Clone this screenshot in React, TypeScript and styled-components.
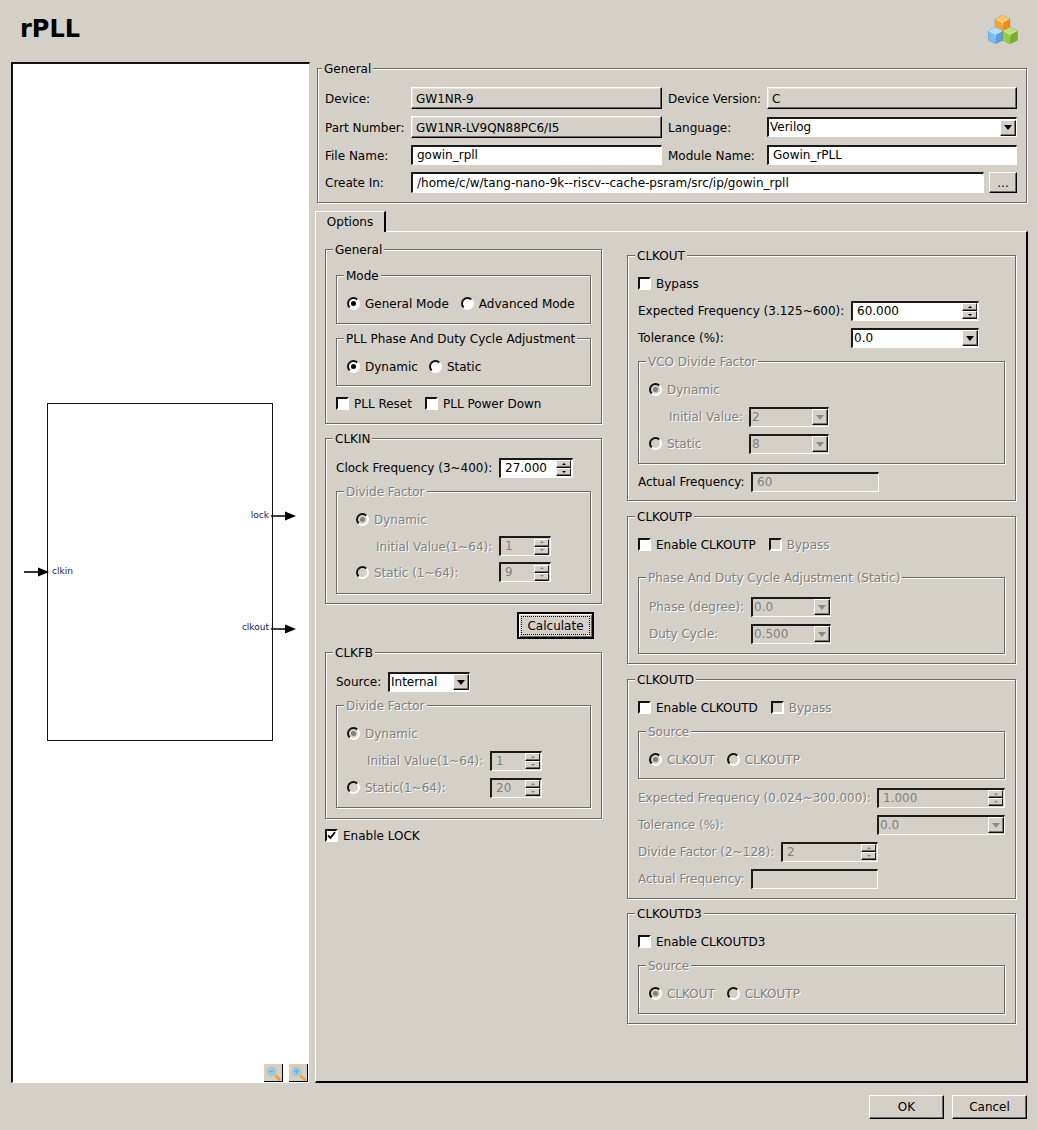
import React from "react";
import styled, { createGlobalStyle } from "styled-components";

const Global = createGlobalStyle`
  html, body { margin: 0; padding: 0; background: #d4d0c8; }
  body { font-family: "DejaVu Sans", sans-serif; font-size: 12px; color: #000; }
  #root { width: 1037px; height: 1130px; }
`;

const Page = styled.div`
  width: 1037px; height: 1130px; display: flex; flex-direction: column;
  background: #d4d0c8; overflow: hidden;
`;
const Header = styled.header`
  height: 62px; flex: none; box-sizing: border-box; padding: 15px 19px 0 20px;
  display: flex; justify-content: space-between; align-items: flex-start;
`;
const Title = styled.h1`
  margin: 0; font-size: 24px; line-height: 28px; font-weight: 700;
  font-family: "DejaVu Sans", sans-serif;
`;
const Main = styled.main`
  flex: none; height: 1021px; display: flex; padding-left: 11px; gap: 5px;
`;
const Preview = styled.section`
  position: relative; box-sizing: border-box; width: 299px; height: 1021px; background: #fff;
  border-style: solid; border-width: 2px 1px 1px 2px;
  border-color: #111 #cfcfc2 #fff #111;
`;
const Block = styled.div`
  position: absolute; left: 34px; top: 339px; width: 226px; height: 338px;
  box-sizing: border-box; border: 1px solid #111;
`;
const Pin = styled.div<{ $y: number; $out?: boolean }>`
  position: absolute; top: ${p => p.$y - 7}px; height: 14px; display: flex; align-items: center;
  ${p => p.$out ? "left: 100%; margin-left: -1px;" : "right: 100%; margin-right: -1px;"}
`;
const PinLabel = styled.span<{ $y: number; $out?: boolean }>`
  position: absolute; top: ${p => p.$y - 7}px; font-size: 9px; line-height: 13px; color: #10206a;
  ${p => p.$out ? "right: 3px;" : "left: 4px;"}
`;
const ZoomBtn = styled.button<{ $r: number }>`
  position: absolute; right: ${p => p.$r}px; bottom: 0; width: 19px; height: 18px; padding: 0;
  display: flex; align-items: center; justify-content: center; background: #d4d0c8;
  border: 0; border-right: 1px solid #000; border-bottom: 1px solid #000;
`;
const RightCol = styled.div`
  width: 713px; box-sizing: border-box; padding-top: 6px; display: flex; flex-direction: column;
`;
const Box = styled.div<{ $pt?: number; $pb?: number; $mt?: number }>`
  box-sizing: border-box; border: 1px solid #6b6965;
  box-shadow: 1px 1px 0 #fff, inset 1px 1px 0 #fff;
  padding: ${p => p.$pt ?? 14}px 10px ${p => p.$pb ?? 6}px 10px;
  margin-top: ${p => p.$mt ?? 0}px;
`;
const TopBox = styled(Box)`
  margin-left: 2px; margin-right: 1px; padding: 18px 9px 9px 7px; flex: none;
`;
const Legend = styled.div<{ $pull?: number }>`
  display: flex; height: 0; align-items: center; margin-top: ${p => -(p.$pull ?? 14) - 1}px;
  margin-bottom: ${p => (p.$pull ?? 14) + 1}px; margin-left: -3px;
`;
const LegendText = styled.span<{ $off?: boolean }>`
  background: #d4d0c8; padding: 2px 2px 0; white-space: nowrap; line-height: 15px;
  ${p => p.$off && "color: #808080; text-shadow: 1px 1px 0 #fff;"}
`;
const Row = styled.div<{ $h?: number; $gap?: number; $ml?: number; $mt?: number }>`
  display: flex; align-items: center; height: ${p => p.$h ?? 27}px;
  gap: ${p => p.$gap ?? 0}px; margin-left: ${p => p.$ml ?? 0}px; margin-top: ${p => p.$mt ?? 0}px;
`;
const Text = styled.span<{ $off?: boolean; $w?: number; $pl?: number; $ml?: number }>`
  flex: none; white-space: nowrap; line-height: 15px; box-sizing: border-box;
  padding-top: 2px; padding-left: ${p => p.$pl ?? 0}px; margin-left: ${p => p.$ml ?? 0}px;
  ${p => p.$w && `width: ${p.$w}px;`}
  ${p => p.$off && "color: #808080; text-shadow: 1px 1px 0 #fff;"}
`;
const ChoiceWrap = styled.label<{ $w?: number; $ml?: number }>`
  display: flex; align-items: center; gap: 5px; flex: none;
  ${p => p.$w && `width: ${p.$w}px;`}
  margin-left: ${p => p.$ml ?? 0}px;
`;
const RadioDot = styled.span<{ $on?: boolean; $off?: boolean }>`
  flex: none; width: 13px; height: 13px; box-sizing: border-box; border-radius: 50%;
  display: flex; align-items: center; justify-content: center;
  border: 2px solid; border-color: #111 #fff #fff #111;
  background: ${p => p.$off ? "#d4d0c8" : "#fff"};
  &::after {
    content: ""; width: 5px; height: 5px; border-radius: 50%;
    background: ${p => p.$on ? (p.$off ? "#808080" : "#000") : "transparent"};
  }
`;
const CheckBox = styled.span<{ $off?: boolean }>`
  flex: none; width: 13px; height: 13px; box-sizing: border-box;
  border: 2px solid; border-color: #111 #fff #fff #111;
  background: ${p => p.$off ? "#d4d0c8" : "#fff"};
  display: flex; align-items: center; justify-content: center;
`;
const Sunken = styled.div<{ $w: number; $off?: boolean; $ml?: number; $pl?: number; $h?: number }>`
  flex: none; box-sizing: border-box; width: ${p => p.$w}px; height: ${p => p.$h ?? 20}px;
  margin-left: ${p => p.$ml ?? 0}px;
  border-style: solid; border-color: #1a1a1a #fff #fff #1a1a1a;
  border-width: 2px 1px 1px 2px;
  background: ${p => p.$off ? "#d4d0c8" : "#fff"};
  display: flex; align-items: center; justify-content: space-between;
  padding-left: ${p => p.$pl ?? 4}px;
  ${p => p.$off && "color: #808080;"}
`;
const Value = styled.span`
  white-space: nowrap; line-height: 15px; overflow: hidden;
`;
const RaisedField = styled.div<{ $w: number; $h?: number }>`
  flex: none; box-sizing: border-box; width: ${p => p.$w}px; height: ${p => p.$h ?? 22}px;
  border: 1px solid; border-color: #fff #000 #000 #fff;
  box-shadow: inset -1px -1px 0 #6b6965, inset 1px 1px 0 #e6e3dc;
  display: flex; align-items: center; padding: 2px 0 0 4px;
`;
const SpinBtns = styled.div`
  flex: none; width: 15px; height: 16px; margin-right: 1px; display: flex; flex-direction: column;
`;
const SpinBtn = styled.div`
  flex: 1; box-sizing: border-box; background: #d4d0c8;
  border: 1px solid; border-color: #fff #222 #111 #fff;
  box-shadow: inset 0 -1px 0 #6b6965;
  display: flex; align-items: center; justify-content: center;
`;
const TriUp = styled.span<{ $off?: boolean }>`
  width: 0; height: 0; border-left: 2px solid transparent; border-right: 2px solid transparent;
  border-bottom: 2px solid ${p => p.$off ? "#808080" : "#000"}; margin-bottom: 1px;
`;
const TriDown = styled.span<{ $off?: boolean }>`
  width: 0; height: 0; border-left: 2px solid transparent; border-right: 2px solid transparent;
  border-top: 2px solid ${p => p.$off ? "#808080" : "#000"}; margin-bottom: 1px;
`;
const ComboBtn = styled.div`
  flex: none; width: 16px; height: 16px; box-sizing: border-box; background: #d4d0c8;
  border: 1px solid; border-color: #fff #111 #111 #fff;
  box-shadow: inset -1px -1px 0 #777;
  display: flex; align-items: center; justify-content: center;
`;
const ComboTri = styled.span<{ $off?: boolean }>`
  width: 0; height: 0; border-left: 4px solid transparent; border-right: 4px solid transparent;
  border-top: 5px solid ${p => p.$off ? "#8a8a8a" : "#000"};
`;
const MoreBtn = styled.button`
  flex: none; margin-left: 5px; width: 28px; height: 21px; padding: 0 0 2px; font: inherit; font-size: 12px;
  box-sizing: border-box; background: #d4d0c8; color: #000;
  border: 1px solid; border-color: #fff #000 #000 #fff;
  box-shadow: inset -1px -1px 0 #6b6965;
  display: flex; align-items: flex-end; justify-content: center;
`;
const TabBar = styled.div`
  display: flex; flex: none; margin-top: 8px; height: 20px; position: relative; z-index: 1;
`;
const Tab = styled.div`
  box-sizing: border-box; width: 71px; height: 21px; background: #d4d0c8;
  border-style: solid; border-color: #fff #000 transparent #fff; border-width: 1px 2px 0 1px;
  display: flex; align-items: center; justify-content: center;
`;
const Pane = styled.div`
  flex: 1; box-sizing: border-box; display: flex; gap: 25px; padding: 17px 0 0 9px;
  border-style: solid; border-color: #fff #000 #000 #fff; border-width: 1px 2px 2px 1px;
`;
const LeftTabCol = styled.div`
  width: 277px; flex: none; display: flex; flex-direction: column;
`;
const RightTabCol = styled.div`
  width: 389px; flex: none; padding-top: 6px; display: flex; flex-direction: column;
`;
const DefaultBtnRow = styled.div`
  display: flex; justify-content: flex-end; padding-right: 8px; margin-top: 8px;
`;
const DefaultBtn = styled.button`
  box-sizing: border-box; width: 77px; height: 27px; padding: 0; font: inherit; color: #000;
  background: #d4d0c8; border: 2px solid #000; outline: 1px dotted #000; outline-offset: -5px;
  box-shadow: inset 1px 1px 0 #fff, inset -1px -1px 0 #6b6965;
`;
const Footer = styled.footer`
  flex: 1; display: flex; justify-content: flex-end; gap: 8px; padding: 12px 10px 0 0;
`;
const PushBtn = styled.button`
  box-sizing: border-box; width: 75px; height: 24px; padding: 0; font: inherit; color: #000;
  background: #d4d0c8; border: 1px solid; border-color: #fff #000 #000 #fff;
  box-shadow: inset -1px -1px 0 #6b6965;
`;

type GroupProps = { title: string; off?: boolean; pt?: number; pb?: number; mt?: number; children?: React.ReactNode };
const Group = ({ title, off, pt = 14, pb = 6, mt = 0, children }: GroupProps) => (
  <Box $pt={pt} $pb={pb} $mt={mt}>
    <Legend $pull={pt}><LegendText $off={off}>{title}</LegendText></Legend>
    {children}
  </Box>
);
const Radio = ({ label, on, off, w, ml }: { label: string; on?: boolean; off?: boolean; w?: number; ml?: number }) => (
  <ChoiceWrap $w={w} $ml={ml}>
    <RadioDot $on={on} $off={off} />
    <Text $off={off}>{label}</Text>
  </ChoiceWrap>
);
const Check = ({ label, on, off, ml }: { label: string; on?: boolean; off?: boolean; ml?: number }) => (
  <ChoiceWrap $ml={ml}>
    <CheckBox $off={off}>
      {on && (
        <svg width="9" height="9" viewBox="0 0 9 9">
          <path d="M1 4.5 L3.5 7 L8 1" fill="none" stroke="#000" strokeWidth="1.8" />
        </svg>
      )}
    </CheckBox>
    <Text $off={off}>{label}</Text>
  </ChoiceWrap>
);
const Spin = ({ value, w, off, ml }: { value: string; w: number; off?: boolean; ml?: number }) => (
  <Sunken $w={w} $off={off} $ml={ml}>
    <Value>{value}</Value>
    <SpinBtns>
      <SpinBtn><TriUp $off={off} /></SpinBtn>
      <SpinBtn><TriDown $off={off} /></SpinBtn>
    </SpinBtns>
  </Sunken>
);
const Combo = ({ value, w, off, ml, h }: { value: string; w: number; off?: boolean; ml?: number; h?: number }) => (
  <Sunken $w={w} $off={off} $ml={ml} $pl={1} $h={h}>
    <Value>{value}</Value>
    <ComboBtn><ComboTri $off={off} /></ComboBtn>
  </Sunken>
);
const Arrow = ({ dark }: { dark?: boolean }) => (
  <svg width="25" height="12" viewBox="0 0 25 12">
    <path d="M0 6 H15" stroke={dark ? "#333" : "#000"} strokeWidth={dark ? 2 : 1.5} />
    <path d="M14 1.5 L25 6 L14 10.5 Z" fill="#000" />
  </svg>
);
const Magnifier = ({ plus }: { plus?: boolean }) => (
  <svg width="16" height="16" viewBox="0 0 16 16">
    <path d="M9.8 9.8 L14.5 14.5" stroke="#f0a030" strokeWidth="2.6" strokeLinecap="round" />
    <circle cx="6.5" cy="6.5" r="5" fill="#8ccaf2" stroke="#e6c68a" strokeWidth="1.3" />
    <path d="M4.5 6.5 H8.5" stroke="#5ea6e0" strokeWidth="1" />
    {plus && <path d="M6.5 4.5 V8.5" stroke="#5ea6e0" strokeWidth="1" />}
  </svg>
);
const Cube = ({ x, y, top, left, right }: { x: number; y: number; top: string; left: string; right: string }) => (
  <g transform={`translate(${x} ${y})`}>
    <path d="M7.5 0 L15 3.8 L7.5 7.6 L0 3.8 Z" fill={top} />
    <path d="M0 3.8 L7.5 7.6 V17 L0 13.2 Z" fill={left} />
    <path d="M15 3.8 L7.5 7.6 V17 L15 13.2 Z" fill={right} />
    <path d="M7.5 0 L15 3.8 V13.2 L7.5 17 L0 13.2 V3.8 Z" fill="none" stroke="#00000030" strokeWidth="0.6" />
    <path d="M1 4 L7.5 7.4 L14 4 M7.5 7.4 V10" fill="none" stroke="#ffffff90" strokeWidth="0.7" />
  </g>
);
const Logo = () => (
  <svg width="30" height="29" viewBox="0 0 30 29">
    <Cube x={7} y={0} top="#fdc468" left="#fda42f" right="#f08c14" />
    <Cube x={0} y={12} top="#b4dcfb" left="#79bbf5" right="#5aa0e6" />
    <Cube x={14.5} y={12} top="#bfe07a" left="#9acb45" right="#7cb02c" />
  </svg>
);

export default function App() {
  return (
    <Page>
      <Global />
      <Header>
        <Title>rPLL</Title>
        <Logo />
      </Header>
      <Main>
        <Preview>
          <Block>
            <Pin $y={112} $out><Arrow /></Pin>
            <PinLabel $y={112} $out>lock</PinLabel>
            <Pin $y={168}><Arrow dark /></Pin>
            <PinLabel $y={168}>clkin</PinLabel>
            <Pin $y={225} $out><Arrow /></Pin>
            <PinLabel $y={224} $out>clkout</PinLabel>
          </Block>
          <ZoomBtn $r={26}><Magnifier /></ZoomBtn>
          <ZoomBtn $r={1}><Magnifier plus /></ZoomBtn>
        </Preview>
        <RightCol>
          <TopBox>
            <Legend $pull={18}><LegendText>General</LegendText></Legend>
            <Row $h={22}>
              <Text $w={86}>Device:</Text>
              <RaisedField $w={251}>GW1NR-9</RaisedField>
              <Text $w={99} $ml={6}>Device Version:</Text>
              <RaisedField $w={250}>C</RaisedField>
            </Row>
            <Row $h={22} $mt={7}>
              <Text $w={86}>Part Number:</Text>
              <RaisedField $w={251}>GW1NR-LV9QN88PC6/I5</RaisedField>
              <Text $w={99} $ml={6}>Language:</Text>
              <Combo value="Verilog" w={250} />
            </Row>
            <Row $h={20} $mt={7}>
              <Text $w={86}>File Name:</Text>
              <Sunken $w={251}><Value>gowin_rpll</Value></Sunken>
              <Text $w={99} $ml={6}>Module Name:</Text>
              <Sunken $w={250}><Value>Gowin_rPLL</Value></Sunken>
            </Row>
            <Row $h={21} $mt={7}>
              <Text $w={86}>Create In:</Text>
              <Sunken $w={573} $h={21}><Value>/home/c/w/tang-nano-9k--riscv--cache-psram/src/ip/gowin_rpll</Value></Sunken>
              <MoreBtn>...</MoreBtn>
            </Row>
          </TopBox>
          <TabBar><Tab>Options</Tab></TabBar>
          <Pane>
            <LeftTabCol>
              <Group title="General" pt={25} pb={6}>
                <Group title="Mode">
                  <Row $gap={12}>
                    <Radio label="General Mode" on />
                    <Radio label="Advanced Mode" />
                  </Row>
                </Group>
                <Group title="PLL Phase And Duty Cycle Adjustment" mt={14} pb={5}>
                  <Row $gap={11}>
                    <Radio label="Dynamic" on />
                    <Radio label="Static" />
                  </Row>
                </Group>
                <Row $mt={4} $gap={13}>
                  <Check label="PLL Reset" />
                  <Check label="PLL Power Down" />
                </Row>
              </Group>
              <Group title="CLKIN" mt={14} pt={15} pb={9}>
                <Row>
                  <Text $w={163}>Clock Frequency (3~400):</Text>
                  <Spin value="27.000" w={74} />
                </Row>
                <Group title="Divide Factor" off mt={10} pb={8}>
                  <Row $ml={9}><Radio label="Dynamic" on off /></Row>
                  <Row $h={26}>
                    <Text $off $w={152} $pl={29}>Initial Value(1~64):</Text>
                    <Spin value="1" w={52} off />
                  </Row>
                  <Row $h={26} $ml={9}>
                    <Radio label="Static (1~64):" off w={143} />
                    <Spin value="9" w={52} off />
                  </Row>
                </Group>
              </Group>
              <DefaultBtnRow><DefaultBtn>Calculate</DefaultBtn></DefaultBtnRow>
              <Group title="CLKFB" mt={13} pt={15} pb={10}>
                <Row>
                  <Text $w={52}>Source:</Text>
                  <Combo value="Internal" w={82} />
                </Row>
                <Group title="Divide Factor" off mt={10}>
                  <Row><Radio label="Dynamic" on off /></Row>
                  <Row>
                    <Text $off $w={143} $pl={20}>Initial Value(1~64):</Text>
                    <Spin value="1" w={52} off />
                  </Row>
                  <Row>
                    <Radio label="Static(1~64):" off w={143} />
                    <Spin value="20" w={52} off />
                  </Row>
                </Group>
              </Group>
              <Row $mt={3}><Check label="Enable LOCK" on /></Row>
            </LeftTabCol>
            <RightTabCol>
              <Group title="CLKOUT" pb={5}>
                <Row><Check label="Bypass" /></Row>
                <Row><Text $w={213}>Expected Frequency (3.125~600):</Text><Spin value="60.000" w={128} /></Row>
                <Row><Text $w={213}>Tolerance (%):</Text><Combo value="0.0" w={128} /></Row>
                <Group title="VCO Divide Factor" off mt={10}>
                  <Row><Radio label="Dynamic" on off /></Row>
                  <Row>
                    <Text $off $w={100} $pl={20}>Initial Value:</Text>
                    <Combo value="2" w={80} off />
                  </Row>
                  <Row>
                    <Radio label="Static" off w={100} />
                    <Combo value="8" w={80} off />
                  </Row>
                </Group>
                <Row $mt={4}>
                  <Text $w={113}>Actual Frequency:</Text>
                  <Sunken $w={128} $off><Value>60</Value></Sunken>
                </Row>
              </Group>
              <Group title="CLKOUTP" mt={15} pt={14} pb={9}>
                <Row>
                  <Check label="Enable CLKOUTP" />
                  <Check label="Bypass" off ml={13} />
                </Row>
                <Group title="Phase And Duty Cycle Adjustment (Static)" off mt={19} pt={15} pb={6}>
                  <Row><Text $off $w={102}>Phase (degree):</Text><Combo value="0.0" w={80} off /></Row>
                  <Row><Text $off $w={102}>Duty Cycle:</Text><Combo value="0.500" w={80} off /></Row>
                </Group>
              </Group>
              <Group title="CLKOUTD" mt={15} pt={14} pb={6}>
                <Row>
                  <Check label="Enable CLKOUTD" />
                  <Check label="Bypass" off ml={13} />
                </Row>
                <Group title="Source" off mt={10} pb={5}>
                  <Row $gap={12}>
                    <Radio label="CLKOUT" on off />
                    <Radio label="CLKOUTP" off />
                  </Row>
                </Group>
                <Row $mt={5}><Text $off $w={239}>Expected Frequency (0.024~300.000):</Text><Spin value="1.000" w={128} off /></Row>
                <Row><Text $off $w={239}>Tolerance (%):</Text><Combo value="0.0" w={128} off /></Row>
                <Row><Text $off $w={143}>Divide Factor (2~128):</Text><Spin value="2" w={97} off /></Row>
                <Row><Text $off $w={113}>Actual Frequency:</Text><Sunken $w={127} $off /></Row>
              </Group>
              <Group title="CLKOUTD3" mt={14} pt={14} pb={9}>
                <Row><Check label="Enable CLKOUTD3" /></Row>
                <Group title="Source" off mt={10}>
                  <Row $gap={12}>
                    <Radio label="CLKOUT" on off />
                    <Radio label="CLKOUTP" off />
                  </Row>
                </Group>
              </Group>
            </RightTabCol>
          </Pane>
        </RightCol>
      </Main>
      <Footer>
        <PushBtn>OK</PushBtn>
        <PushBtn>Cancel</PushBtn>
      </Footer>
    </Page>
  );
}
